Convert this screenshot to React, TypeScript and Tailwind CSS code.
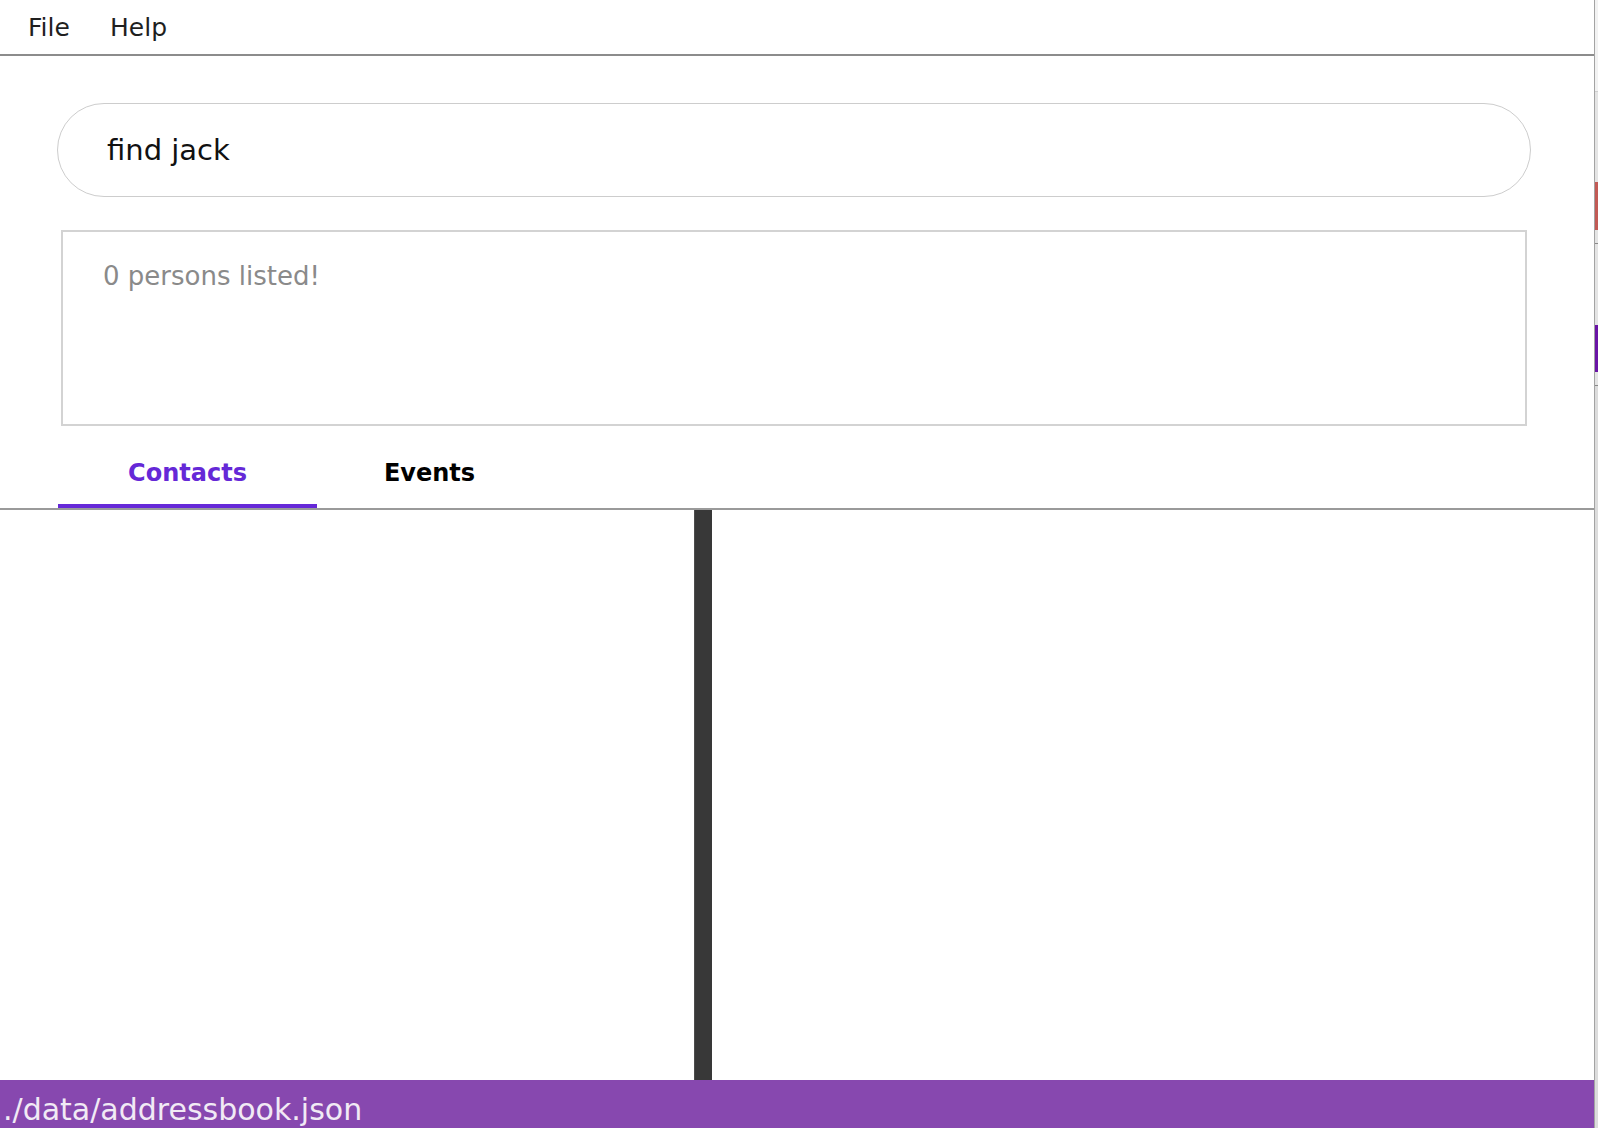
import React from "react";

const tabs = [
  { label: "Contacts", width: "w-[259px]", active: true },
  { label: "Events", width: "w-[225px]", active: false },
];

function EdgeStrip() {
  // a sliver of the window sitting behind this one
  return (
    <div className="flex w-[4px] flex-col border-l border-[#a3a3a3] bg-[#e4e4e4]">
      <div className="h-[91px] bg-[#f2f2f2]" />
      <div className="h-[91px] border-t border-[#cfcfcf]" />
      <div className="h-[48px] bg-[#c25a55]" />
      <div className="h-[13px]" />
      <div className="h-[1px] bg-[#8a8a8a]" />
      <div className="h-[81px]" />
      <div className="h-[47px] bg-[#6a14a6]" />
      <div className="h-[13px]" />
      <div className="h-[1px] bg-[#8a8a8a]" />
      <div className="flex-1 bg-[#dcdcdc]" />
    </div>
  );
}

export default function App() {
  return (
    <div className="flex h-[1128px] w-[1598px] overflow-hidden bg-white font-['DejaVu_Sans',sans-serif]">
      <div className="flex w-[1594px] flex-col bg-white">
        {/* menu bar */}
        <div className="flex h-[56px] shrink-0 items-center border-b-2 border-[#8c8c8c] pl-[28px] text-[25px] leading-none text-[#1f1f1f]">
          <span className="w-[82px]">File</span>
          <span>Help</span>
        </div>

        {/* command box */}
        <div className="ml-[57px] mt-[47px] flex h-[94px] w-[1474px] shrink-0 items-center rounded-full border-[1.5px] border-[#cdcdcd] pl-[49px] text-[29px] leading-none text-[#111]">
          find jack
        </div>

        {/* result display */}
        <div className="ml-[61px] mt-[33px] h-[196px] w-[1466px] shrink-0 border-2 border-[#d3d3d3] pl-[40px] pt-[31px] text-[26px] leading-none text-[#8a8a8a]">
          0 persons listed!
        </div>

        {/* tabs */}
        <div className="flex h-[82px] shrink-0 pl-[58px]">
          {tabs.map((t) => (
            <div
              key={t.label}
              className={`flex ${t.width} items-end justify-center pb-[19px] text-[24px] font-bold leading-none ${
                t.active ? "border-b-4 border-[#6528d7] text-[#6528d7]" : "border-b-4 border-transparent text-black"
              }`}
            >
              {t.label}
            </div>
          ))}
        </div>
        <div className="h-[2px] shrink-0 bg-[#9a9a9a]" />

        {/* panels */}
        <div className="flex min-h-0 flex-1">
          <div className="w-[694px]" />
          <div className="w-[18px] border-l border-[#4d4d4d] bg-[#383838]" />
          <div className="flex-1" />
        </div>

        {/* status bar */}
        <div className="h-[48px] shrink-0 overflow-hidden bg-[#8748af] pl-[3px] pt-[15px] text-[30px] leading-none text-[#f1eaf5]">
          ./data/addressbook.json
        </div>
      </div>
      <EdgeStrip />
    </div>
  );
}
